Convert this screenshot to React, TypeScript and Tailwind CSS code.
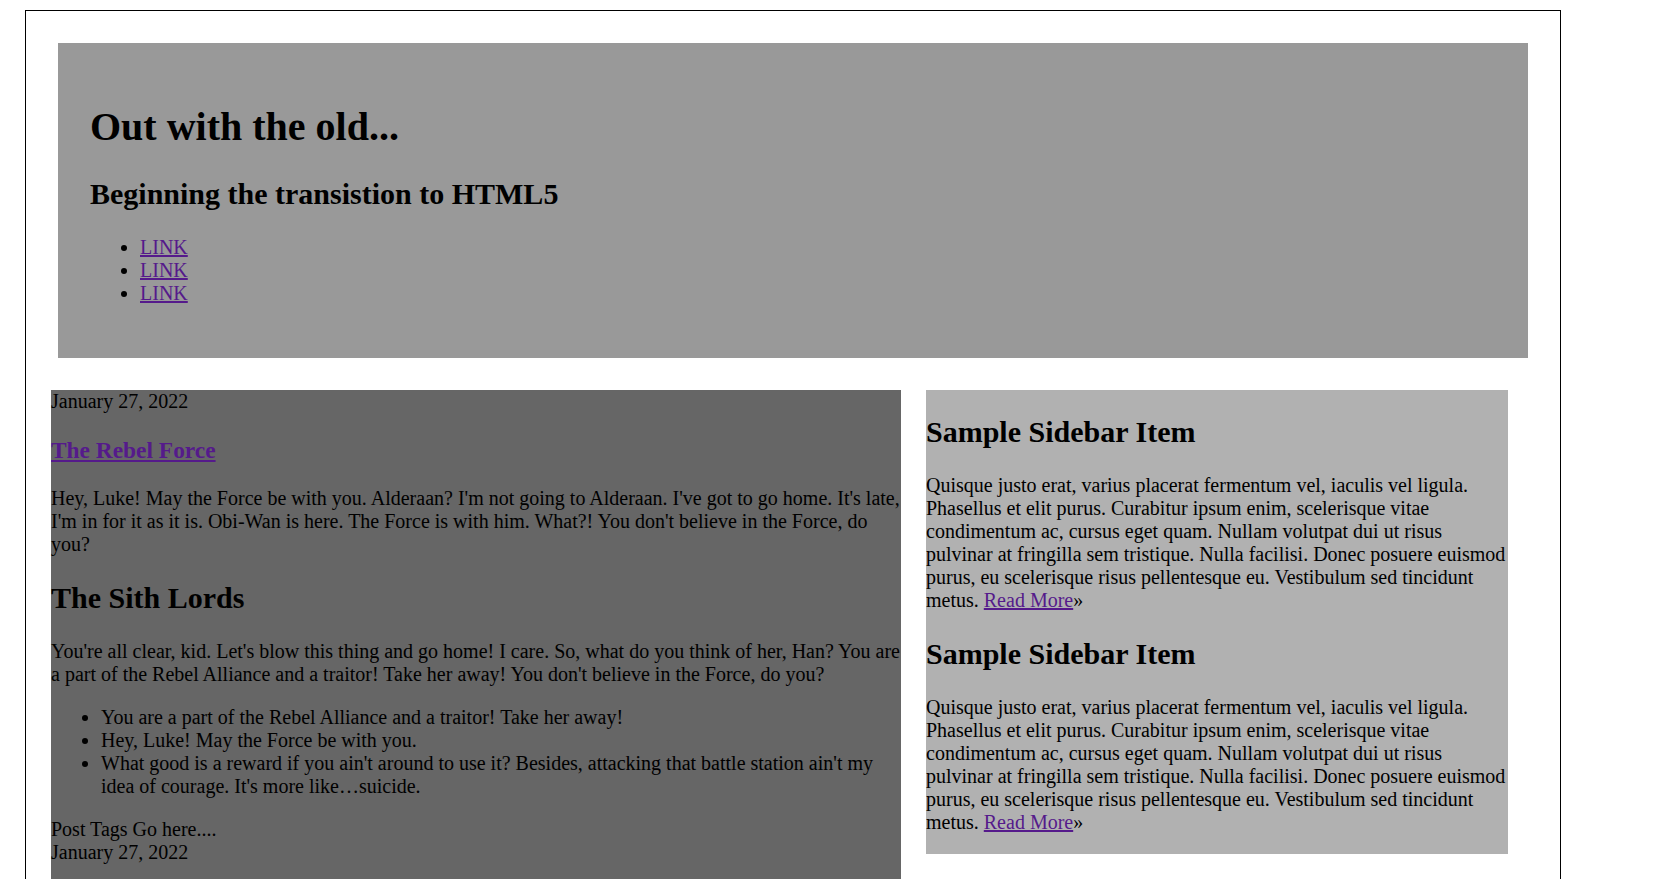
import React from "react";

const linkCls = "text-[#551a8b] underline";

function Article() {
  return (
    <article>
      <div>January 27, 2022</div>
      <h3 className="my-[23.4px] text-[23.4px] font-bold">
        <a href="#" className={linkCls}>The Rebel Force</a>
      </h3>
      <p className="my-[20px]">
        Hey, Luke! May the Force be with you. Alderaan? I'm not going to Alderaan. I've got to go home. It's late, I'm in for it as it is. Obi-Wan is here. The Force is with him. What?! You don't believe in the Force, do you?
      </p>
      <h2 className="my-[24.9px] text-[30px] font-bold">The Sith Lords</h2>
      <p className="my-[20px]">
        You're all clear, kid. Let's blow this thing and go home! I care. So, what do you think of her, Han? You are a part of the Rebel Alliance and a traitor! Take her away! You don't believe in the Force, do you?
      </p>
      <ul className="my-[20px] list-disc pl-[50px]">
        <li>You are a part of the Rebel Alliance and a traitor! Take her away!</li>
        <li>Hey, Luke! May the Force be with you.</li>
        <li>What good is a reward if you ain't around to use it? Besides, attacking that battle station ain't my idea of courage. It's more like…suicide.</li>
      </ul>
      <div>
        <div>Post Tags Go here....</div>
        <div>January 27, 2022</div>
      </div>
    </article>
  );
}

function SidebarItem() {
  return (
    <div>
      <h2 className="my-[24.9px] text-[30px] font-bold">Sample Sidebar Item</h2>
      <p className="my-[20px]">
        Quisque justo erat, varius placerat fermentum vel, iaculis vel ligula. Phasellus et elit purus. Curabitur ipsum enim, scelerisque vitae condimentum ac, cursus eget quam. Nullam volutpat dui ut risus pulvinar at fringilla sem tristique. Nulla facilisi. Donec posuere euismod purus, eu scelerisque risus pellentesque eu. Vestibulum sed tincidunt metus.{" "}
        <a href="#" className={linkCls}>Read More</a>»
      </p>
    </div>
  );
}

export default function App() {
  return (
    <div className="min-h-screen bg-white font-['Liberation_Serif','Times_New_Roman',serif] text-[20px] leading-[normal] text-black">
      <div className="ml-[25px] w-[1536px] pt-[10px]">
        <div className="border border-black pb-[40px]">
          <header className="m-[32px] bg-[#999999] px-[32px] pt-[32px] pb-[33.5px]">
            <h1 className="my-[27.6px] text-[40px] font-bold">Out with the old...</h1>
            <h2 className="mt-[25.4px] mb-[24.6px] text-[30px] font-bold">Beginning the transistion to HTML5</h2>
            <ul className="my-[20px] list-disc pl-[50px]">
              <li><a href="#" className={linkCls}>LINK</a></li>
              <li><a href="#" className={linkCls}>LINK</a></li>
              <li><a href="#" className={linkCls}>LINK</a></li>
            </ul>
          </header>
          <div className="flex items-start pl-[25px]">
            <main className="flow-root w-[850px] bg-[#666666]">
              <Article />
              <div className="h-[20px]" />
              <Article />
            </main>
            <aside className="ml-[25px] flow-root w-[582px] bg-[#b1b1b1]">
              <SidebarItem />
              <SidebarItem />
            </aside>
          </div>
        </div>
      </div>
    </div>
  );
}
